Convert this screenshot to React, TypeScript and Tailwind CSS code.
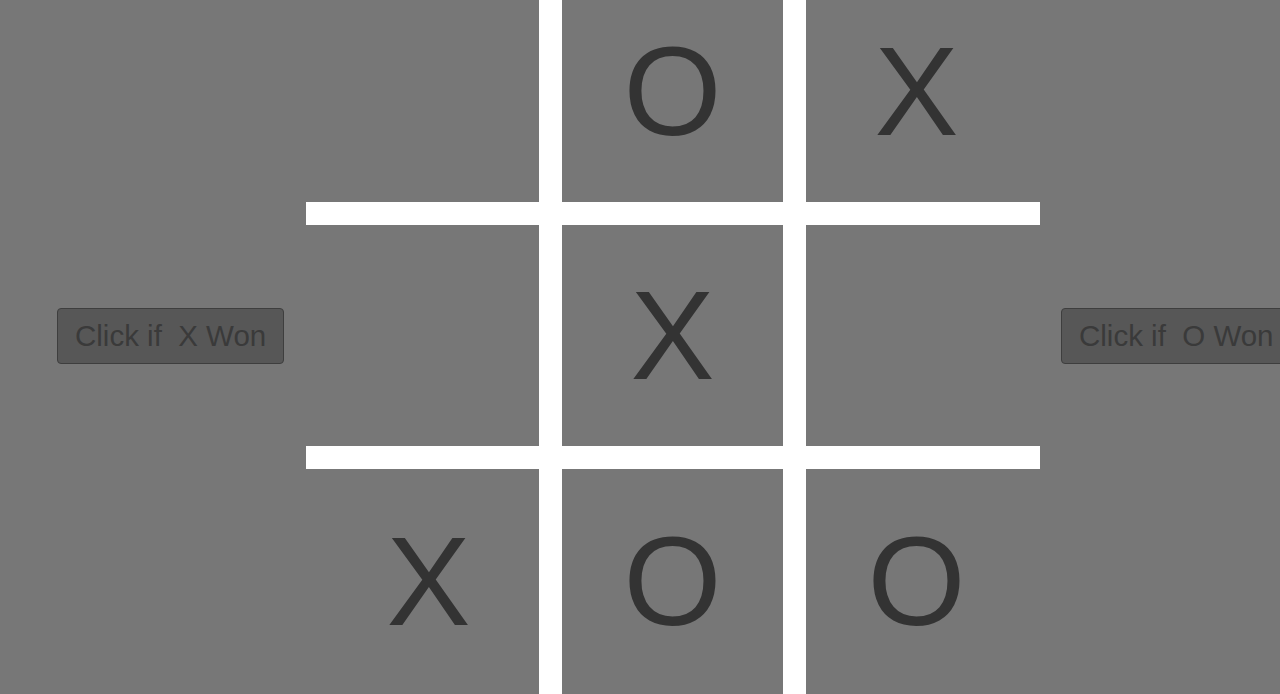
const BOARD: string[][] = [
  ["", "O", "X"],
  ["", "X", ""],
  ["X", "O", "O"],
];

function Cell({ mark }: { mark: string }) {
  return (
    <div className="flex w-[221px] shrink-0 items-center justify-center bg-[#777777] text-[126px] leading-none text-[#333333]">
      {mark}
    </div>
  );
}

function Row({ cells, height }: { cells: string[]; height: string }) {
  return (
    <div className={`flex w-[734px] bg-[#777777] pl-[12px] ${height}`}>
      <div className="flex gap-[23px] bg-white">
        {cells.map((m, i) => (
          <Cell key={i} mark={m} />
        ))}
      </div>
    </div>
  );
}

function WinButton({ who }: { who: string }) {
  return (
    <button className="mb-[22px] h-[56px] w-[227px] shrink-0 whitespace-pre rounded-[4px] border border-[#3e3e3e] bg-[#575757] px-[17px] text-left text-[29.5px] text-[#3a3a3a]">
      {`Click if  ${who} Won`}
    </button>
  );
}

export default function App() {
  return (
    <div
      className="flex h-[694px] w-[1280px] items-center overflow-hidden bg-[#777777] pl-[57px]"
      style={{ fontFamily: '"Liberation Sans", Arial, sans-serif' }}
    >
      <WinButton who="X" />
      <div className="ml-[22px] flex shrink-0 flex-col">
        <div className="mt-[-19px] flex flex-col">
          <Row cells={BOARD[0]} height="h-[221px]" />
          <div className="h-[23px] w-[734px] bg-white" />
          <Row cells={BOARD[1]} height="h-[221px]" />
          <div className="h-[23px] w-[734px] bg-white" />
          <Row cells={BOARD[2]} height="h-[225px]" />
        </div>
      </div>
      <div className="ml-[21px] flex shrink-0">
        <WinButton who="O" />
      </div>
    </div>
  );
}
